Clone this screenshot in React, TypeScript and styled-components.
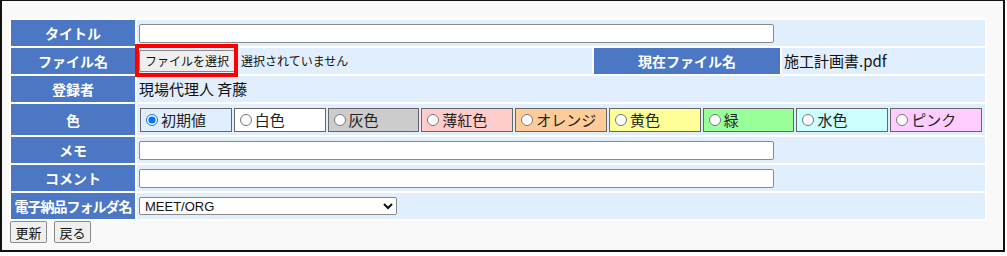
import styled, {createGlobalStyle} from 'styled-components';

const GlobalStyle = createGlobalStyle`
  body {
    margin: 0;
    background: #fff;
    font-family: "Noto Sans CJK JP", "Liberation Sans", sans-serif;
  }
`;

const Frame = styled.div`
  width: 1005px;
  height: 252px;
  box-sizing: border-box;
  border: 2px solid #111;
  border-top-width: 1px;
  background: #f9f9f9;
  padding: 17px 0 0 7px;
`;

const FormTable = styled.table`
  width: 978px;
  table-layout: fixed;
  border-collapse: separate;
  border-spacing: 2px;
  background: #fff;
`;

const Row = styled.tr<{$tall?: boolean}>`
  height: ${p => (p.$tall ? '31px' : '26px')};
`;

const Label = styled.th<{$tight?: boolean}>`
  background: #4b77c5;
  color: #fff;
  font-size: 14px;
  line-height: 18px;
  font-weight: 700;
  text-align: center;
  padding: 0;
  white-space: nowrap;
  overflow: hidden;
  letter-spacing: ${p => (p.$tight ? '-1px' : '0')};
`;

const Cell = styled.td<{$tall?: boolean}>`
  background: #e1eefd;
  font-size: 15px;
  line-height: 18px;
  color: #111;
  padding: ${p => (p.$tall ? '3px 3px 2px 3px' : '0 2px')};
  white-space: nowrap;
`;

const TextInput = styled.input`
  display: block;
  width: 635px;
  height: 19px;
  box-sizing: border-box;
  border: 1px solid #8a8a8a;
  border-radius: 2px;
  background: #fff;
  padding: 0 2px;
  font-size: 13px;
`;

const FileRow = styled.div`
  display: flex;
  align-items: center;
  gap: 6px;
`;

const Marked = styled.span`
  position: relative;
  display: inline-flex;

  &::after {
    content: '';
    position: absolute;
    top: -6px;
    left: -4px;
    right: -3px;
    bottom: -5px;
    border: 4px solid #f00;
    pointer-events: none;
  }
`;

const PlainButton = styled.button`
  height: 22px;
  box-sizing: border-box;
  padding: 0 5px;
  border: 1px solid #8a8a8a;
  border-radius: 2px;
  background: #efefef;
  color: #111;
  font-family: "Noto Sans CJK JP", sans-serif;
  font-size: 12px;
  line-height: 1;
`;

const SmallText = styled.span`
  font-size: 12px;
  color: #111;
`;

const Swatches = styled.div`
  display: flex;
  gap: 2px;
`;

const Swatch = styled.label<{$bg: string}>`
  flex: 1;
  display: flex;
  align-items: center;
  height: 24px;
  box-sizing: border-box;
  border: 1px solid #666;
  background: ${p => p.$bg};
  font-size: 15px;
  color: #222;

  & > input {
    margin: 0 3px 0 5px;
    width: 12px;
    height: 12px;
  }
`;

const Select = styled.select`
  display: block;
  width: 258px;
  height: 18px;
  box-sizing: border-box;
  border: 1px solid #8a8a8a;
  border-radius: 2px;
  background: #fff;
  font-family: "Liberation Sans", Arial, sans-serif;
  font-size: 13px;
  color: #111;
  padding: 0 0 0 1px;
`;

const Actions = styled.div`
  display: flex;
  gap: 7px;
  padding-left: 1px;
`;

const ActionButton = styled(PlainButton)`
  width: 37px;
  font-size: 13px;
  padding: 0;
`;

const colors = [
  {name: '初期値', bg: '#e1eefd'},
  {name: '白色', bg: '#ffffff'},
  {name: '灰色', bg: '#cccccc'},
  {name: '薄紅色', bg: '#ffcccc'},
  {name: 'オレンジ', bg: '#ffcc99'},
  {name: '黄色', bg: '#ffff99'},
  {name: '緑', bg: '#99ff99'},
  {name: '水色', bg: '#ccffff'},
  {name: 'ピンク', bg: '#ffccff'},
];

const App = () => {
  return (
    <>
      <GlobalStyle />
      <Frame>
        <FormTable>
          <colgroup>
            <col style={{width: 124}} />
            <col style={{width: 455}} />
            <col style={{width: 186}} />
            <col style={{width: 203}} />
          </colgroup>
          <tbody>
            <Row>
              <Label>タイトル</Label>
              <Cell colSpan={3}>
                <TextInput type="text" />
              </Cell>
            </Row>
            <Row>
              <Label>ファイル名</Label>
              <Cell>
                <FileRow>
                  <Marked>
                    <PlainButton type="button">ファイルを選択</PlainButton>
                  </Marked>
                  <SmallText>選択されていません</SmallText>
                </FileRow>
              </Cell>
              <Label>現在ファイル名</Label>
              <Cell>施工計画書.pdf</Cell>
            </Row>
            <Row>
              <Label>登録者</Label>
              <Cell colSpan={3}>現場代理人 斉藤</Cell>
            </Row>
            <Row $tall>
              <Label>色</Label>
              <Cell colSpan={3} $tall>
                <Swatches>
                  {colors.map((c, i) => (
                    <Swatch key={c.name} $bg={c.bg}>
                      <input type="radio" name="color" defaultChecked={i === 0} />
                      {c.name}
                    </Swatch>
                  ))}
                </Swatches>
              </Cell>
            </Row>
            <Row>
              <Label>メモ</Label>
              <Cell colSpan={3}>
                <TextInput type="text" />
              </Cell>
            </Row>
            <Row>
              <Label>コメント</Label>
              <Cell colSpan={3}>
                <TextInput type="text" />
              </Cell>
            </Row>
            <Row>
              <Label $tight>電子納品フォルダ名</Label>
              <Cell colSpan={3}>
                <Select defaultValue="MEET/ORG">
                  <option>MEET/ORG</option>
                </Select>
              </Cell>
            </Row>
          </tbody>
        </FormTable>
        <Actions>
          <ActionButton type="button">更新</ActionButton>
          <ActionButton type="button">戻る</ActionButton>
        </Actions>
      </Frame>
    </>
  );
};

export default App;
